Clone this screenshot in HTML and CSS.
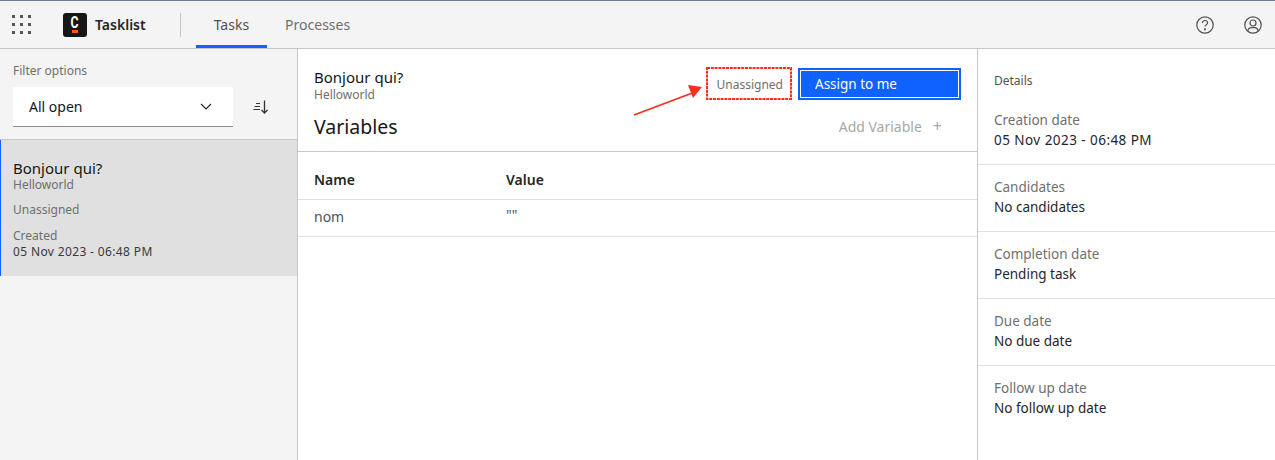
FILE: index.html
```html
<!DOCTYPE html>
<html lang="en">
<head>
    <meta charset="UTF-8">
    <title>Tasklist</title>
    <link rel="stylesheet" href="styles.css">
</head>
<body>
    <div class="header">
        <svg class="switcher" width="20" height="20" viewBox="0 0 20 20">
            <g fill="#555">
                <rect x="0" y="0" width="3" height="3"/><rect x="8" y="0" width="3" height="3"/><rect x="16" y="0" width="3" height="3"/>
                <rect x="0" y="8" width="3" height="3"/><rect x="8" y="8" width="3" height="3"/><rect x="16" y="8" width="3" height="3"/>
                <rect x="0" y="16" width="3" height="3"/><rect x="8" y="16" width="3" height="3"/><rect x="16" y="16" width="3" height="3"/>
            </g>
        </svg>
        <div class="logo">
            <span class="logo-c">C</span>
            <span class="logo-bar"></span>
        </div>
        <span class="app-name">Tasklist</span>
        <div class="header-sep"></div>
        <div class="tab tab-active">Tasks</div>
        <div class="tab">Processes</div>
        <div class="header-icons">
            <svg width="20" height="20" viewBox="0 0 20 20" fill="none" stroke="#525252" stroke-width="1.2">
                <circle cx="10" cy="10" r="8.2"/>
                <path d="M7.4 8c0-1.5 1.1-2.5 2.6-2.5s2.6 1 2.6 2.3c0 1.9-2.6 1.9-2.6 3.8"/>
                <circle cx="10" cy="14.3" r=".5" fill="#525252"/>
            </svg>
            <svg width="20" height="20" viewBox="0 0 20 20" fill="none" stroke="#525252" stroke-width="1.2">
                <circle cx="10" cy="10" r="8.2"/>
                <circle cx="10" cy="8" r="3"/>
                <path d="M4.8 16c.5-2.4 2-3.3 3.6-3.3h3.2c1.6 0 3.1.9 3.6 3.3"/>
            </svg>
        </div>
    </div>
    <div class="main">
        <div class="sidebar">
            <div class="filter">
                <div class="filter-label">Filter options</div>
                <div class="filter-row">
                    <div class="dropdown">
                        <span>All open</span>
                        <svg width="12" height="8" viewBox="0 0 12 8" fill="none" stroke="#222" stroke-width="1.1"><path d="M1 1l5 5 5-5"/></svg>
                    </div>
                    <svg class="sort-icon" width="16" height="16" viewBox="0 0 16 16" fill="none" stroke="#333" stroke-width="1.1">
                        <path d="M3 4.500h4M1.500 7.500h5.500M.5 10.500h6.500"/>
                        <path d="M11.500 1.500v12.500M8.500 11l3 3 3-3" stroke-width="1.3"/>
                    </svg>
                </div>
            </div>
            <div class="task-card">
                <div class="task-name">Bonjour qui?</div>
                <div class="task-process">Helloworld</div>
                <div class="task-assignee">Unassigned</div>
                <div class="task-created">Created</div>
                <div class="task-date">05 Nov 2023 - 06:48 PM</div>
            </div>
        </div>
        <div class="content">
            <div class="content-head">
                <div class="head-row">
                    <div>
                        <div class="content-title">Bonjour qui?</div>
                        <div class="content-process">Helloworld</div>
                    </div>
                    <div class="head-actions">
                        <span class="assign-state">Unassigned</span>
                        <div class="assign-btn"><span>Assign to me</span></div>
                    </div>
                </div>
                <div class="vars-row">
                    <span class="vars-title">Variables</span>
                    <span class="add-var">Add Variable<span class="add-plus">+</span></span>
                </div>
            </div>
            <div class="table-row table-head">
                <div class="col-name">Name</div>
                <div>Value</div>
            </div>
            <div class="table-row table-body">
                <div class="col-name">nom</div>
                <div class="val">""</div>
            </div>
            <svg class="red-box" width="86" height="33" viewBox="0 0 86 33">
                <rect x="1" y="1" width="84" height="31" fill="none" stroke="#fb2c20" stroke-width="2" stroke-dasharray="3 .8"/>
            </svg>
            <svg class="arrow" width="80" height="40" viewBox="0 0 80 40">
                <path d="M1 30L62 7" stroke="#fb2c20" stroke-width="1.8" fill="none"/>
                <path d="M69 2L55 0l5 13z" fill="#fb2c20"/>
            </svg>
        </div>
        <div class="details">
            <div class="details-title">Details</div>
            <div class="detail first">
                <div class="detail-label">Creation date</div>
                <div class="detail-value">05 Nov 2023 - 06:48 PM</div>
            </div>
            <div class="detail">
                <div class="detail-label">Candidates</div>
                <div class="detail-value">No candidates</div>
            </div>
            <div class="detail">
                <div class="detail-label">Completion date</div>
                <div class="detail-value">Pending task</div>
            </div>
            <div class="detail">
                <div class="detail-label">Due date</div>
                <div class="detail-value">No due date</div>
            </div>
            <div class="detail last">
                <div class="detail-label">Follow up date</div>
                <div class="detail-value">No follow up date</div>
            </div>
        </div>
    </div>
</body>
</html>
```

FILE: styles.css
```css
* {
    box-sizing: border-box;
}
body {
    margin: 0;
    height: 460px;
    overflow: hidden;
    display: flex;
    flex-direction: column;
    background-color: #ffffff;
    color: #161616;
    font-family: "Noto Sans", "Open Sans", sans-serif;
    font-size: 14px;
}
.header {
    height: 49px;
    display: flex;
    align-items: center;
    background-color: #f4f4f4;
    border-top: 1px solid #6f7d94;
    border-bottom: 1px solid #c6c6c6;
}
.switcher {
    margin-left: 12px;
}
.logo {
    margin-left: 31px;
    width: 24px;
    height: 24px;
    background-color: #161616;
    border-radius: 3px;
    display: flex;
    flex-direction: column;
    align-items: center;
    color: #fff;
}
.logo-c {
    font-family: Roboto, sans-serif;
    font-size: 17px;
    font-weight: 700;
    line-height: 13px;
    margin-top: 3px;
    transform: scaleX(.72);
}
.logo-bar {
    width: 6px;
    height: 3px;
    margin-top: 1px;
    background-color: #fc5d0d;
}
.app-name {
    margin-left: 8px;
    font-size: 14px;
    font-weight: 600;
    color: #262626;
}
.header-sep {
    width: 1px;
    height: 24px;
    margin-left: 34px;
    background-color: #c6c6c6;
}
.tab {
    height: 47px;
    padding: 3px 18px 0;
    display: flex;
    align-items: center;
    color: #6f6f6f;
    border-bottom: 3px solid transparent;
}
.tab-active {
    margin-left: 15px;
    color: #525252;
    border-bottom-color: #0f62fe;
}
.header-icons {
    margin-left: auto;
    margin-right: 12px;
    display: flex;
    gap: 28px;
}
.main {
    flex: 1;
    display: flex;
    min-height: 0;
}
.sidebar {
    width: 298px;
    background-color: #f4f4f4;
    border-right: 1px solid #c6c6c6;
}
.filter {
    height: 91px;
    padding: 15px 0 0 13px;
    border-bottom: 1px solid #c6c6c6;
}
.filter-label {
    font-size: 12px;
    line-height: 14px;
    color: #6f6f6f;
}
.filter-row {
    margin-top: 9px;
    display: flex;
    align-items: center;
}
.dropdown {
    width: 220px;
    height: 40px;
    padding: 0 21px 0 16px;
    display: flex;
    align-items: center;
    justify-content: space-between;
    background-color: #fff;
    border-bottom: 1px solid #8d8d8d;
}
.sort-icon {
    margin-left: 20px;
}
.task-card {
    height: 136px;
    padding: 19px 0 0 12px;
    background-color: #e0e0e0;
    border-left: 1px solid #0f62fe;
}
.task-name {
    font-size: 15px;
    line-height: 18px;
}
.task-process,
.task-assignee,
.task-created {
    font-size: 12px;
    line-height: 14px;
    color: #6f6f6f;
}
.task-process {
    margin-top: 1px;
}
.task-assignee {
    margin-top: 11px;
}
.task-created {
    margin-top: 12px;
}
.task-date {
    margin-top: 1px;
    font-size: 12px;
    line-height: 16px;
    letter-spacing: .36px;
    color: #393939;
}
.content {
    position: relative;
    flex: 1;
    min-width: 0;
    border-right: 1px solid #c6c6c6;
}
.content-head {
    height: 103px;
    padding: 0 16px;
    border-bottom: 1px solid #c6c6c6;
}
.head-row {
    height: 56px;
    display: flex;
    justify-content: space-between;
    align-items: flex-start;
    padding-top: 18px;
}
.content-title {
    font-size: 15px;
    line-height: 20px;
}
.content-process {
    margin-top: 1px;
    font-size: 12px;
    line-height: 14px;
    color: #6f6f6f;
}
.head-actions {
    display: flex;
    align-items: center;
    margin-top: 1px;
}
.assign-state {
    font-size: 12px;
    color: #6f6f6f;
    margin-right: 15px;
}
.assign-btn {
    width: 163px;
    height: 32px;
    padding: 0 15px;
    display: flex;
    align-items: center;
    font-size: 13.5px;
    color: #fff;
    background-color: #0f62fe;
    border: 2px solid #0f62fe;
    box-shadow: inset 0 0 0 1px #fff;
}
.vars-row {
    display: flex;
    justify-content: space-between;
    align-items: center;
    height: 32px;
    margin-top: 5px;
}
.vars-title {
    font-size: 19.5px;
}
.add-var {
    margin-right: 19px;
    color: #a8a8a8;
}
.add-plus {
    margin-left: 11px;
    font-size: 16px;
}
.table-row {
    display: flex;
    align-items: center;
    padding-left: 16px;
    border-bottom: 1px solid #e0e0e0;
}
.col-name {
    width: 192px;
}
.table-head {
    height: 48px;
    padding-top: 8px;
    font-weight: 600;
    color: #262626;
}
.table-body {
    height: 37px;
    padding-bottom: 4px;
    color: #525252;
}
.val {
    margin-top: -4px;
}
.red-box {
    position: absolute;
    left: 408px;
    top: 18px;
}
.arrow {
    position: absolute;
    left: 335px;
    top: 36px;
}
.details {
    width: 297px;
    font-size: 13.5px;
}
.details-title {
    padding: 25px 0 0 16px;
    height: 51px;
    font-size: 12px;
    line-height: 14px;
    color: #525252;
}
.detail {
    height: 67px;
    padding: 13px 16px 0;
    border-bottom: 1px solid #e0e0e0;
}
.detail.first {
    height: 65px;
    padding-top: 11px;
}
.detail.last {
    border-bottom: none;
}
.detail-label {
    line-height: 18px;
    color: #6f6f6f;
}
.detail-value {
    line-height: 18px;
    margin-top: 2px;
    color: #262626;
}
.detail.first .detail-value {
    letter-spacing: .45px;
}
```
